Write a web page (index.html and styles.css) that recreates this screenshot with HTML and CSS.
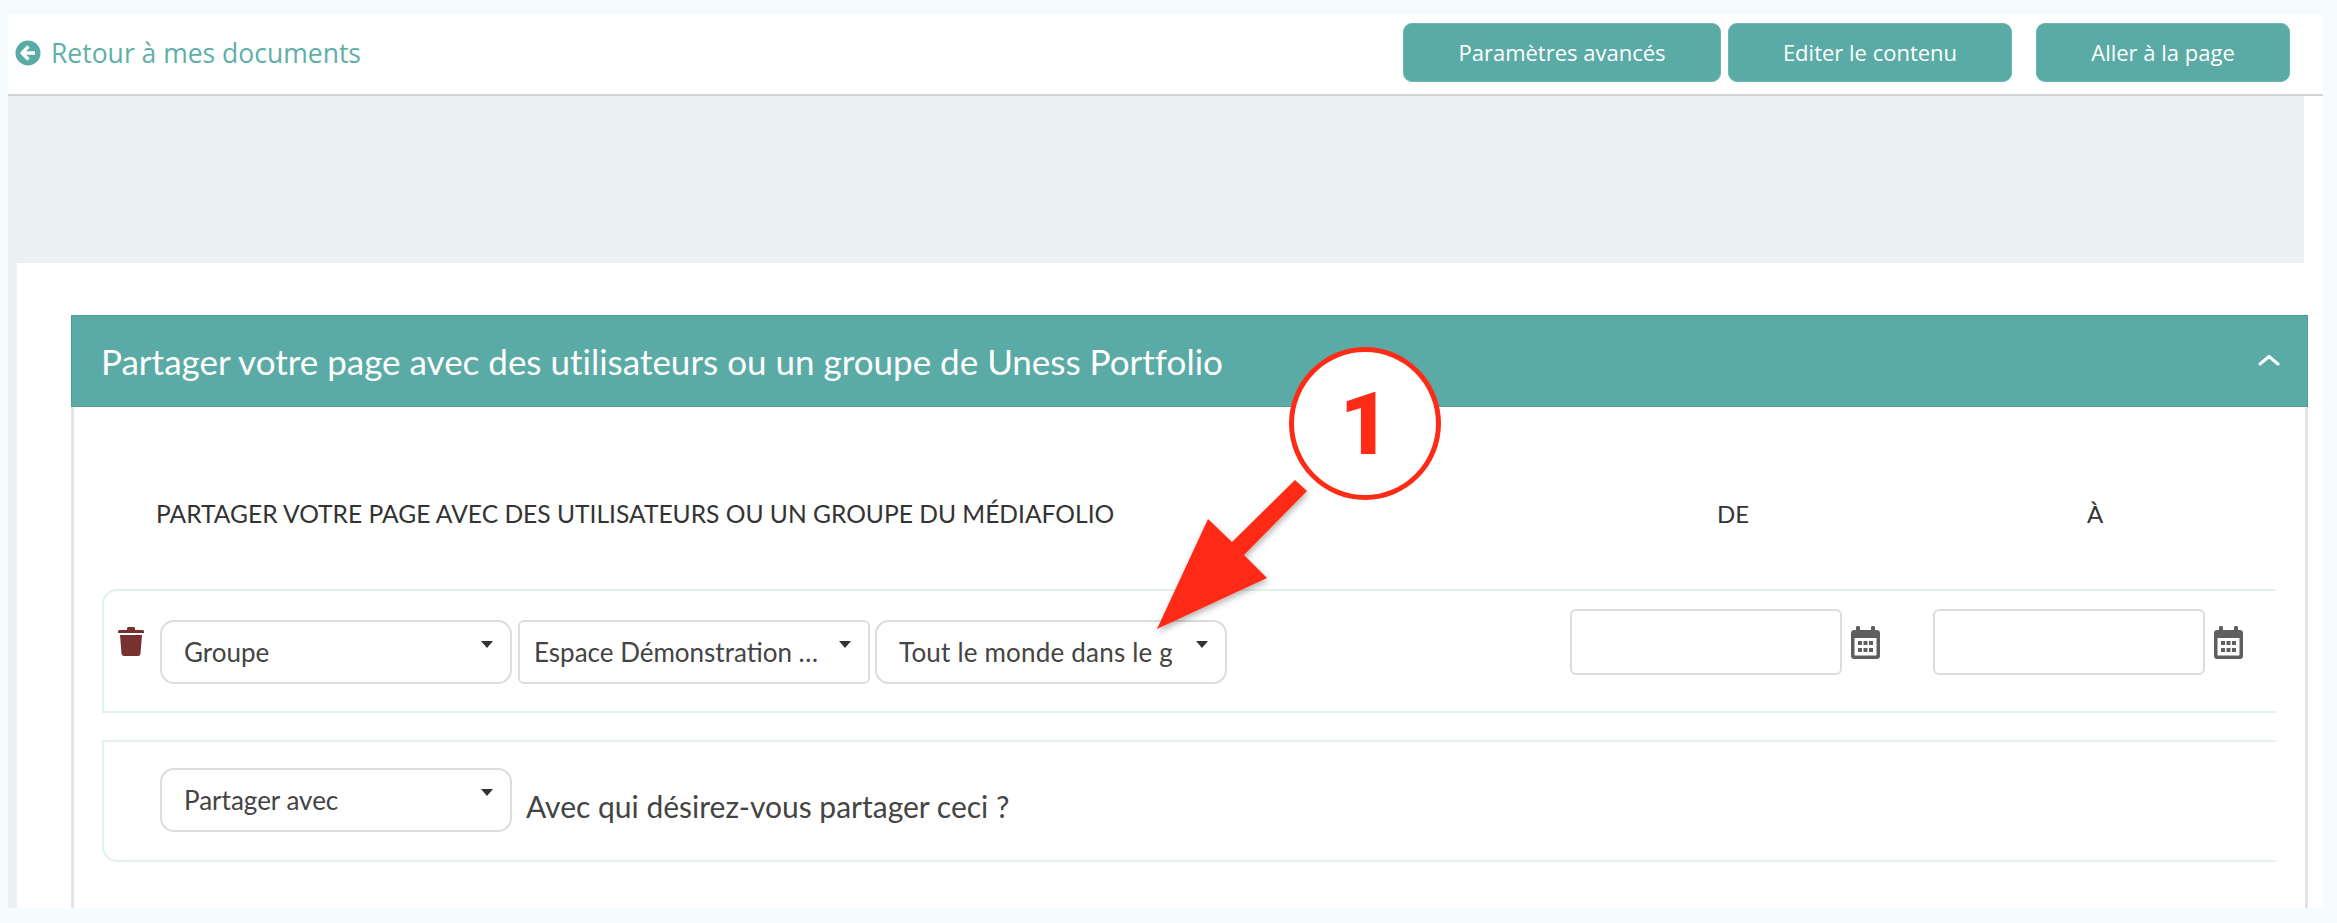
FILE: index.html
```html
<!DOCTYPE html>
<html lang="fr">
<head>
    <meta charset="UTF-8">
    <meta name="viewport" content="width=device-width, initial-scale=1.0">
    <title>Partager votre page</title>
    <link rel="stylesheet" href="styles.css">
</head>
<body>
    <div class="frame">
        <div class="topbar">
            <a class="back-link" href="#">
                <svg class="back-icon" viewBox="0 0 26 26">
                    <circle cx="13" cy="13" r="12.5" fill="#5aaba5"/>
                    <path d="M13.5 6.5 7 13l6.5 6.5M7.5 13H20" fill="none" stroke="#fff" stroke-width="3.4" stroke-linejoin="round"/>
                </svg>
                Retour à mes documents
            </a>
            <div class="actions">
                <button class="btn btn-params">Paramètres avancés</button>
                <button class="btn btn-edit">Editer le contenu</button>
                <button class="btn btn-goto">Aller à la page</button>
            </div>
        </div>

        <div class="banner"></div>

        <div class="content">
            <div class="panel">
                <div class="panel-head">
                    <span>Partager votre page avec des utilisateurs ou un groupe de Uness Portfolio</span>
                    <svg class="chevron" viewBox="0 0 22 12">
                        <path d="M2 10 11 2.500l9 7.500" fill="none" stroke="#fff" stroke-width="3" stroke-linecap="round" stroke-linejoin="round"/>
                    </svg>
                </div>

                <div class="panel-body">
                    <div class="col-heads">
                        <div class="col-main">PARTAGER VOTRE PAGE AVEC DES UTILISATEURS OU UN GROUPE DU MÉDIAFOLIO</div>
                        <div class="col-date">DE</div>
                        <div class="col-date">À</div>
                    </div>

                    <div class="share-row row-first">
                        <svg class="trash" viewBox="0 0 26 30">
                            <path d="M9 2.500c0-1 .8-1.500 1.500-1.500h5c.7 0 1.500.5 1.500 1.500V4h7.500c.8 0 1.500.7 1.500 1.500V7H0V5.500C0 4.700.7 4 1.500 4H9zM2 9h22l-1.500 18.500c-.1 1.300-1 2.500-2.500 2.500H6c-1.500 0-2.400-1.200-2.500-2.500z" fill="#78312f"/>
                        </svg>
                        <div class="select select-first"><span class="select-text">Groupe</span></div>
                        <div class="select select-square"><span class="select-text">Espace Démonstration …</span></div>
                        <div class="select"><span class="select-text select-clip">Tout le monde dans le groupe</span></div>

                        <div class="date-wrap date-from">
                            <input class="date-input" type="text">
                            <svg class="cal" viewBox="0 0 29 33">
                                <path d="M5 4V1.500C5 .7 5.700 0 6.500 0h1C8.300 0 9 .7 9 1.500V4h11V1.500c0-.8.7-1.500 1.500-1.500h1c.8 0 1.500.7 1.500 1.500V4h2c1.700 0 3 1.300 3 3v23c0 1.700-1.300 3-3 3H3c-1.700 0-3-1.300-3-3V7c0-1.700 1.300-3 3-3zM3.500 12v17c0 .3.200.5.500.5h21c.3 0 .5-.2.500-.5V12z" fill="#5f5f5f"/>
                                <path d="M7 15h4v4H7zM12.500 15h4v4h-4zM18 15h4v4h-4zM7 22h4v4H7zM12.500 22h4v4h-4zM18 22h4v4h-4z" fill="#5f5f5f"/>
                            </svg>
                        </div>
                        <div class="date-wrap date-to">
                            <input class="date-input" type="text">
                            <svg class="cal" viewBox="0 0 29 33">
                                <path d="M5 4V1.500C5 .7 5.700 0 6.500 0h1C8.300 0 9 .7 9 1.500V4h11V1.500c0-.8.7-1.500 1.500-1.500h1c.8 0 1.500.7 1.500 1.500V4h2c1.700 0 3 1.300 3 3v23c0 1.700-1.300 3-3 3H3c-1.700 0-3-1.300-3-3V7c0-1.700 1.300-3 3-3zM3.500 12v17c0 .3.200.5.500.5h21c.3 0 .5-.2.500-.5V12z" fill="#5f5f5f"/>
                                <path d="M7 15h4v4H7zM12.500 15h4v4h-4zM18 15h4v4h-4zM7 22h4v4H7zM12.500 22h4v4h-4zM18 22h4v4h-4z" fill="#5f5f5f"/>
                            </svg>
                        </div>
                    </div>

                    <div class="share-row row-second">
                        <div class="select select-first"><span class="select-text">Partager avec</span></div>
                        <span class="share-hint">Avec qui désirez-vous partager ceci ?</span>
                    </div>
                </div>
            </div>
        </div>
    </div>

    <!-- annotation posee sur la capture -->
    <div class="callout">
        <span class="callout-num">1</span>
    </div>
    <svg class="callout-arrow" viewBox="0 0 170 170">
        <defs>
            <filter id="arrowShadow" x="-20%" y="-20%" width="140%" height="140%">
                <feDropShadow dx="1" dy="3" stdDeviation="3" flood-color="#000" flood-opacity="0.3"/>
            </filter>
        </defs>
        <path d="M140 1 152 12 89 76 112 99 2 150 53 40 77 63z" fill="#fe2b17" filter="url(#arrowShadow)"/>
    </svg>
</body>
</html>
```

FILE: styles.css
```css
* {
    box-sizing: border-box;
}
html, body {
    height: 100%;
}
body {
    margin: 0;
    padding: 15px 14px 15px 8px;
    background-color: #f6fbfe;
    font-family: "Open Sans", Arial, sans-serif;
    color: #444;
    overflow: hidden;
}
.frame {
    height: 893px;
    background: white;
}

/* barre du haut */
.topbar {
    display: flex;
    justify-content: space-between;
    height: 81px;
    padding: 8px 33px 0 7px;
    border-bottom: 2px solid #d1d3d4;
}
.back-link {
    display: flex;
    align-items: center;
    height: 50px;
    margin-top: 5px;
    font-size: 26.500px;
    color: #5fafa9;
    text-decoration: none;
}
.back-icon {
    width: 26px;
    height: 26px;
    margin-right: 10px;
}
.actions {
    display: flex;
}
.btn {
    height: 59px;
    padding: 0 0 2px;
    border: 1px solid #6db5af;
    border-radius: 9px;
    background-color: #5aaba5;
    color: white;
    font-family: "Open Sans", Arial, sans-serif;
    font-size: 22px;
}
.btn-params {
    width: 318px;
    margin-right: 7px;
}
.btn-edit {
    width: 284px;
    margin-right: 24px;
}
.btn-goto {
    width: 254px;
}

.banner {
    height: 167px;
    margin-right: 19px;
    background-color: #ebf0f3;
}

/* contenu */
.content {
    height: 645px;
    padding: 52px 15px 0 54px;
    border-left: 9px solid #ebf0f3;
    background: white;
}
.panel {
    height: 593px;
    border-left: 3px solid #e3e4e4;
    border-right: 3px solid #e3e4e4;
}
.panel-head {
    display: flex;
    justify-content: space-between;
    align-items: center;
    height: 92px;
    margin: 0 -3px;
    padding: 0 27px 0 29px;
    border: 1px solid #4f9f99;
    background-color: #5aaba5;
    color: white;
    font-family: Lato, Arial, sans-serif;
    font-size: 35px;
    font-variant-ligatures: none;
}
.chevron {
    width: 22px;
    height: 12px;
    margin-bottom: 3px;
}
.panel-body {
    padding: 0 29px 0 28px;
    font-family: Lato, Arial, sans-serif;
}
.col-heads {
    display: flex;
    align-items: center;
    height: 182px;
    padding-top: 31px;
    color: #333;
    font-size: 24px;
}
.col-main {
    flex: none;
    width: 1450px;
    padding-left: 54px;
    font-size: 24.600px;
}
.col-date {
    flex: none;
    width: 362px;
    text-align: center;
}

.share-row {
    display: flex;
    border: 2px solid #e0f1ee;
    border-right: none;
}
.row-first {
    height: 124px;
    padding-top: 29px;
    border-radius: 15px 0 0 0;
}
.row-second {
    height: 122px;
    margin-top: 27px;
    padding-top: 26px;
    border-radius: 0 0 0 15px;
}
.trash {
    flex: none;
    width: 26px;
    height: 30px;
    margin: 6px 0 0 14px;
}
.select {
    position: relative;
    display: flex;
    align-items: center;
    flex: none;
    width: 352px;
    height: 64px;
    margin-left: 5px;
    padding-left: 22px;
    border: 2px solid #dcdcdc;
    border-radius: 14px;
    background: white;
    font-size: 26px;
    color: #444;
}
.select::after {
    content: "";
    position: absolute;
    top: 19px;
    right: 17px;
    border-top: 7px solid #333;
    border-left: 6px solid transparent;
    border-right: 6px solid transparent;
}
.row-first .select-first {
    margin-left: 16px;
    margin-right: 1px;
}
.row-second .select-first {
    margin-left: 56px;
}
.select-square {
    padding-left: 14px;
    border-radius: 6px;
}
.select-text {
    white-space: nowrap;
}
.select-clip {
    display: block;
    width: 273px;
    letter-spacing: 0.2px;
    overflow: hidden;
}
.date-wrap {
    display: flex;
    align-items: flex-start;
    flex: none;
    margin-top: -11px;
}
.date-from {
    margin-left: 343px;
}
.date-to {
    margin-left: 53px;
}
.date-input {
    width: 272px;
    height: 66px;
    border: 2px solid #dcdcdc;
    border-radius: 6px;
    background: white;
}
.cal {
    width: 29px;
    height: 33px;
    margin: 17px 0 0 9px;
}
.share-hint {
    margin: 20px 0 0 14px;
    font-size: 30px;
    color: #444;
}

/* annotation */
.callout {
    position: absolute;
    left: 1289px;
    top: 347px;
    width: 152px;
    height: 153px;
    display: flex;
    justify-content: center;
    align-items: center;
    border: 5px solid #fe2b17;
    border-radius: 50%;
    background: white;
}
.callout-num {
    font-family: Roboto, Arial, sans-serif;
    font-size: 88px;
    font-weight: 900;
    line-height: 1;
    color: #fe2b17;
}
.callout-arrow {
    position: absolute;
    left: 1155px;
    top: 479px;
    width: 170px;
    height: 170px;
}
```
